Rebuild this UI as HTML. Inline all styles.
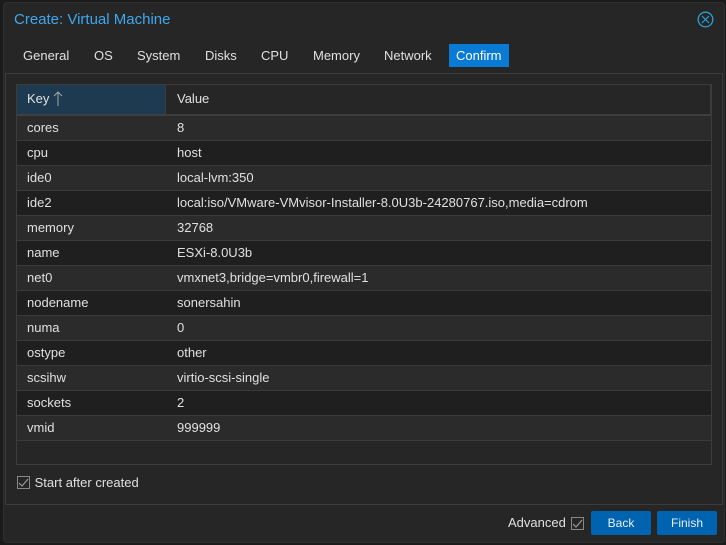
<!DOCTYPE html>
<html><head><style>
*{box-sizing:border-box;margin:0;padding:0}
body{width:726px;height:545px;background:#1b1b1b;font-family:"Liberation Sans",sans-serif;font-size:13px;color:#e0e0e0;position:relative;overflow:hidden}
.win{position:absolute;left:4px;top:3px;width:720px;height:539px;background:#262626;border-radius:3px;box-shadow:0 0 0 1px #2f2f2f}
.title{position:absolute;left:10px;top:8px;font-size:15px;color:#3fa7ee}
.close{position:absolute;left:693px;top:8px}
.tab{position:absolute;top:41px;height:23px;line-height:23px;padding:0 7px;color:#e0e0e0}
.tab.sel{background:#0a7bd5;color:#fff}
.body{position:absolute;left:1px;top:70px;width:718px;height:432px;border:1px solid #3c3c3c;background:#262626}
.grid{position:absolute;left:10px;top:10px;width:696px;height:381px;border:1px solid #3c3c3c}
.hdr{height:31px;border-bottom:2px solid #3e3e3e;position:relative;background:#262626}
.hk{position:absolute;left:0;top:0;width:149px;height:29px;background:#1e3a51;border-right:1px solid #3c3c3c;padding:6px 10px}
.hv{position:absolute;left:150px;top:0;right:0;height:29px;padding:6px 10px;border-right:1px solid #3c3c3c}
.row{height:25px;border-bottom:1px solid #3a3a3a;position:relative;line-height:24px}
.row span{position:absolute;left:10px}
.row b{font-weight:normal;position:absolute;left:160px}
.cb{display:inline-block;width:13px;height:13px;border:1px solid #888;vertical-align:middle;position:relative}
.cb svg{position:absolute;left:0;top:0}
.btn{position:absolute;top:511px;height:24px;line-height:24px;text-align:center;background:#0063b0;color:#e8f0f8;border-radius:2px;font-size:12px}
</style></head><body>
<div class="win">
<div class="title">Create: Virtual Machine</div>
<svg class="close" width="17" height="17" viewBox="0 0 17 17"><circle cx="8.5" cy="8.5" r="7.3" fill="none" stroke="#2c9fd8" stroke-width="1.3"/><path d="M5 5L12 12M12 5L5 12" stroke="#2c9fd8" stroke-width="1.2"/></svg>
<div class="tab" style="left:12px">General</div>
<div class="tab" style="left:83px">OS</div>
<div class="tab" style="left:126px">System</div>
<div class="tab" style="left:194px">Disks</div>
<div class="tab" style="left:250px">CPU</div>
<div class="tab" style="left:302px">Memory</div>
<div class="tab" style="left:373px">Network</div>
<div class="tab sel" style="left:445px">Confirm</div>
<div class="body">
<div class="grid">
<div class="hdr"><div class="hk">Key <svg width="10" height="15" viewBox="0 0 10 15" style="vertical-align:-3px"><path d="M5 1V15M1 5L5 1L9 5" fill="none" stroke="#9aa" stroke-width="1"/></svg></div><div class="hv">Value</div></div>
<div>
<div class="row" style="background:#2b2b2b"><span>cores</span><b>8</b></div>
<div class="row" style="background:#1f1f1f"><span>cpu</span><b>host</b></div>
<div class="row" style="background:#2b2b2b"><span>ide0</span><b>local-lvm:350</b></div>
<div class="row" style="background:#1f1f1f"><span>ide2</span><b>local:iso/VMware-VMvisor-Installer-8.0U3b-24280767.iso,media=cdrom</b></div>
<div class="row" style="background:#2b2b2b"><span>memory</span><b>32768</b></div>
<div class="row" style="background:#1f1f1f"><span>name</span><b>ESXi-8.0U3b</b></div>
<div class="row" style="background:#2b2b2b"><span>net0</span><b>vmxnet3,bridge=vmbr0,firewall=1</b></div>
<div class="row" style="background:#1f1f1f"><span>nodename</span><b>sonersahin</b></div>
<div class="row" style="background:#2b2b2b"><span>numa</span><b>0</b></div>
<div class="row" style="background:#1f1f1f"><span>ostype</span><b>other</b></div>
<div class="row" style="background:#2b2b2b"><span>scsihw</span><b>virtio-scsi-single</b></div>
<div class="row" style="background:#1f1f1f"><span>sockets</span><b>2</b></div>
<div class="row" style="background:#2b2b2b"><span>vmid</span><b>999999</b></div>
</div>
</div>
<div style="position:absolute;left:11px;top:400px"><span class="cb"><svg width="11" height="11" viewBox="0 0 11 11"><path d="M1 6L4 9L10 2" fill="none" stroke="#999" stroke-width="1.2"/></svg></span> <span style="vertical-align:middle;margin-left:1px">Start after created</span></div>
</div>
</div>
<div style="position:absolute;left:508px;top:515px">Advanced <span class="cb" style="margin-left:2px"><svg width="11" height="11" viewBox="0 0 11 11"><path d="M1 6L4 9L10 2" fill="none" stroke="#999" stroke-width="1.2"/></svg></span></div>
<div class="btn" style="left:591px;width:60px">Back</div>
<div class="btn" style="left:657px;width:60px">Finish</div>
</body></html>
